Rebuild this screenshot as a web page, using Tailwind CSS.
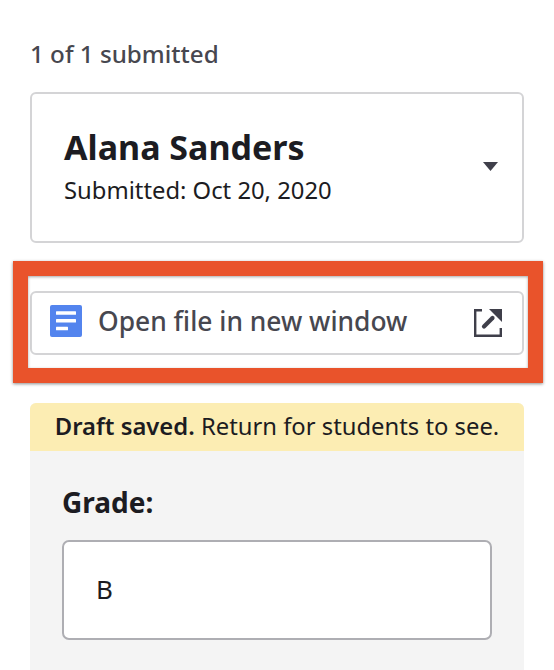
<!DOCTYPE html>
<html lang="en">
<head>
    <meta charset="UTF-8">
    <meta name="viewport" content="width=device-width, initial-scale=1.0">
    <title>Submission</title>
    <script src="https://cdn.jsdelivr.net/npm/@tailwindcss/browser@4"></script>
</head>
<body class="bg-white font-['Noto_Sans',sans-serif] h-[670px] overflow-hidden">
    <main class="w-[494px] ml-[30px] pt-[38px]">

        <!-- Submission count -->
        <p class="text-[24.2px] leading-[32px] font-medium text-[#47474f]">1 of 1 submitted</p>

        <!-- Student card -->
        <section class="mt-[22px] h-[151px] border-2 border-[#d4d4d6] rounded-[6px] pl-[32px] pr-[24px] flex items-center justify-between">
            <div class="pb-[3px]">
                <h2 class="text-[34px] leading-[44px] font-bold text-[#1c1c22] mt-[-2px]">Alana Sanders</h2>
                <p class="mt-[5px] text-[23.8px] leading-[32px] text-[#1c1c22]">Submitted: Oct 20, 2020</p>
            </div>
            <svg class="w-[15px] h-[9px] mt-[-2px]" viewBox="0 0 15 9"><path d="M0 0h15L7.5 9z" fill="#3f3f4a"/></svg>
        </section>

        <!-- Open file button with callout -->
        <div class="relative mt-[48px]">
            <div class="absolute left-[-17px] top-[-30px] w-[530px] h-[122px] border-[15px] border-[#e9532b] shadow-[0_1px_3px_rgba(0,0,0,0.45),inset_0_1px_3px_rgba(0,0,0,0.35)]"></div>
            <button class="w-full h-[64px] border-2 border-[#d4d4d6] rounded-[6px] pl-[18px] pr-[20px] flex items-center">
                <svg class="w-[32px] h-[32px] shrink-0 mt-[-4px]" viewBox="0 0 32 32">
                    <rect width="32" height="32" rx="2" fill="#5384ee"/>
                    <rect x="6" y="6.3" width="20" height="3.4" rx="0.5" fill="#fff"/>
                    <rect x="6" y="14" width="20" height="3.4" rx="0.5" fill="#fff"/>
                    <rect x="6" y="21.8" width="12" height="3.4" rx="0.5" fill="#fff"/>
                </svg>
                <span class="ml-[16px] mt-[-4px] text-[26.4px] leading-[32px] font-medium text-[#47474f]">Open file in new window</span>
                <svg class="ml-auto w-[28px] h-[28px] shrink-0" viewBox="0 0 28 28" fill="none">
                    <path d="M8 1.2H1.2v25.6H26.8V19" stroke="#3f3f4a" stroke-width="2.4"/>
                    <path d="M10 17.5L18.5 9" stroke="#3f3f4a" stroke-width="4.2" stroke-linecap="round"/>
                    <path d="M15 0h13v13z" fill="#3f3f4a"/>
                </svg>
            </button>
        </div>

        <!-- Grade panel -->
        <section class="mt-[48px] h-[300px] bg-[#f4f4f4] rounded-t-[6px] overflow-hidden">
            <div class="h-[48px] bg-[#fcedb3] flex items-center justify-center text-[23.8px] text-[#1c1c22]">
                <p class="mt-[-1px]"><b class="font-semibold">Draft saved.</b> Return for students to see.</p>
            </div>
            <div class="px-[32px] pt-[33px]">
                <label class="block text-[28px] leading-[36px] font-bold text-[#1c1c22]">Grade:</label>
                <div class="mt-[20px] w-[430px] h-[100px] bg-white border-2 border-[#aeaeb3] rounded-[7px] pl-[32px] flex items-center text-[26px] text-[#1c1c22]"><span class="mt-[-2px]">B</span></div>
            </div>
        </section>

    </main>
</body>
</html>
